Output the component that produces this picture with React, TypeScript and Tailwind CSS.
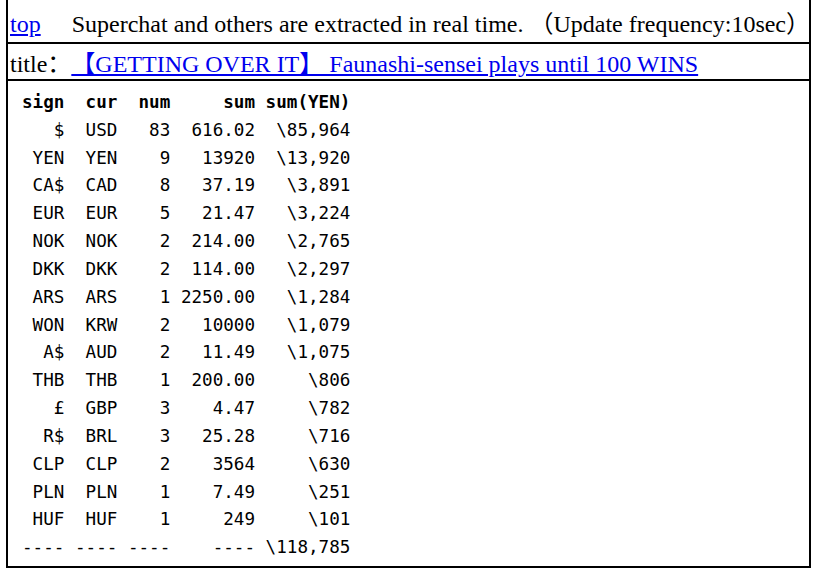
import React from "react";

const data: [string, string, string, string, string][] = [
  ["$", "USD", "83", "616.02", "\\85,964"],
  ["YEN", "YEN", "9", "13920", "\\13,920"],
  ["CA$", "CAD", "8", "37.19", "\\3,891"],
  ["EUR", "EUR", "5", "21.47", "\\3,224"],
  ["NOK", "NOK", "2", "214.00", "\\2,765"],
  ["DKK", "DKK", "2", "114.00", "\\2,297"],
  ["ARS", "ARS", "1", "2250.00", "\\1,284"],
  ["WON", "KRW", "2", "10000", "\\1,079"],
  ["A$", "AUD", "2", "11.49", "\\1,075"],
  ["THB", "THB", "1", "200.00", "\\806"],
  ["£", "GBP", "3", "4.47", "\\782"],
  ["R$", "BRL", "3", "25.28", "\\716"],
  ["CLP", "CLP", "2", "3564", "\\630"],
  ["PLN", "PLN", "1", "7.49", "\\251"],
  ["HUF", "HUF", "1", "249", "\\101"],
];

function fmt(r: [string, string, string, string, string]) {
  return (
    r[0].padStart(4) +
    "  " +
    r[1].padEnd(3) +
    "  " +
    r[2].padStart(3) +
    r[3].padStart(8) +
    " " +
    r[4].padStart(8)
  );
}

export default function App() {
  const header = "sign  cur  num" + "sum".padStart(8) + " " + "sum(YEN)";
  const body = data.map(fmt).join("\n");
  const footer = "---- ---- ----    ---- \\118,785";
  return (
    <div className="bg-white min-h-[571px] w-[816px] text-black">
      <div className="ml-[6px] w-[805px] border-x-2 border-black">
        <div className="h-[44px] border-b-2 border-black pl-[2px] pt-[10px] text-[24px] leading-[28px] font-['Liberation_Serif','Noto_Sans_CJK_SC',serif] whitespace-nowrap [text-spacing-trim:space-all]">
          <a href="#" className="text-[#0000ee] underline">top</a>
          <span className="ml-[31px]">Superchat and others are extracted in real time. （Update frequency:10sec）</span>
        </div>
        <div className="h-[37px] border-b-2 border-black pl-[2px] pt-[6px] text-[24px] leading-[28px] font-['Liberation_Serif','Noto_Sans_CJK_SC',serif] whitespace-nowrap [text-spacing-trim:space-all]">
          <span>title：</span>
          <a href="#" className="text-[#0000ee] underline">【GETTING OVER IT】 Faunashi-sensei plays until 100 WINS</a>
        </div>
        <div className="h-[487px] border-b-2 border-black pl-[14px] pt-[8px]">
          <pre className="m-0 font-['DejaVu_Sans_Mono',monospace] text-[17.6px] leading-[27.83px] text-black">
            <span className="font-bold">{header}</span>
            {"\n" + body + "\n" + footer}
          </pre>
        </div>
      </div>
    </div>
  );
}
